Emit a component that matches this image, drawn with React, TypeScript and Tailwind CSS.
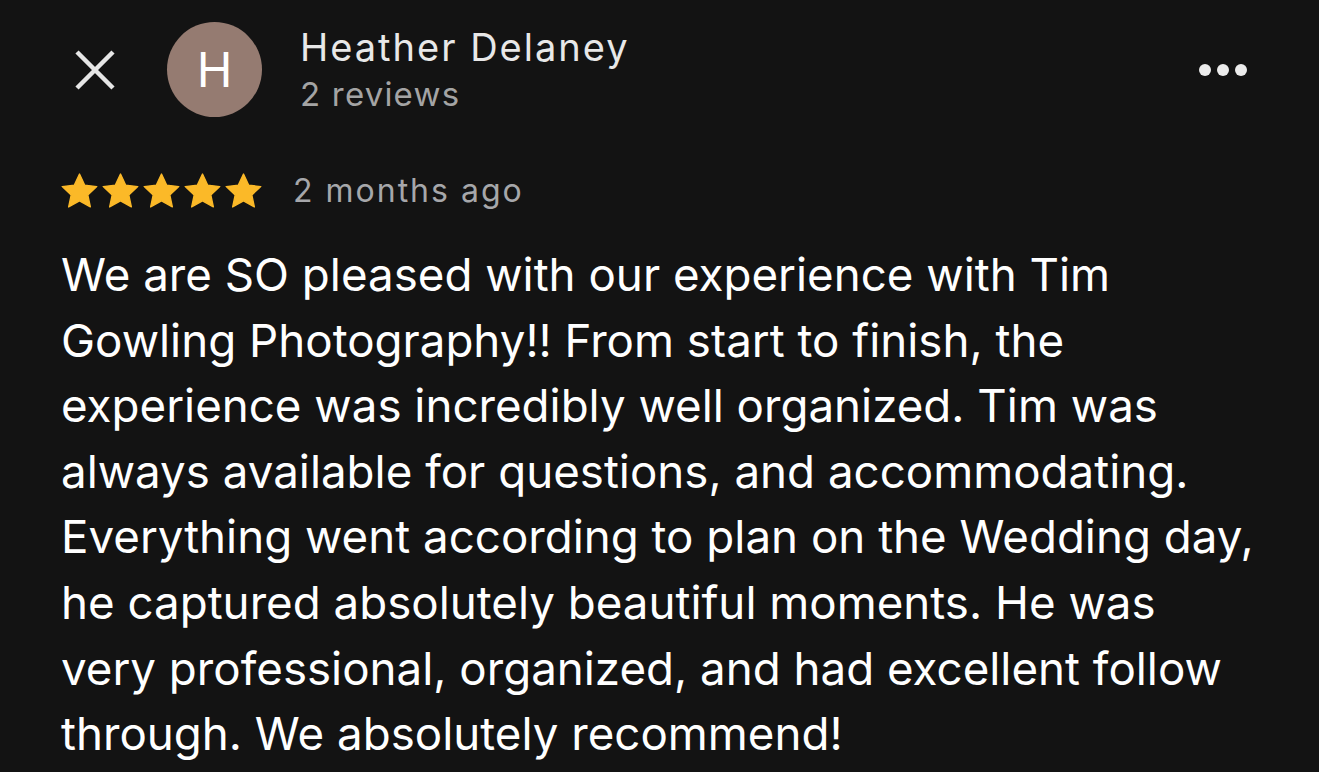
import React from "react";

const reviewLines = [
  "We are SO pleased with our experience with Tim",
  "Gowling Photography!! From start to finish, the",
  "experience was incredibly well organized. Tim was",
  "always available for questions, and accommodating.",
  "Everything went according to plan on the Wedding day,",
  "he captured absolutely beautiful moments. He was",
  "very professional, organized, and had excellent follow",
  "through. We absolutely recommend!",
];

const StarIcon = () => (
  <svg width="41" height="39" viewBox="0 0 24 23" className="shrink-0">
    <path
      d="M12 1.2l3.1 6.6 7.1.8-5.3 4.9 1.5 7.1L12 17l-6.4 3.6 1.5-7.1L1.8 8.6l7.1-.8z"
      fill="#fbb928"
      stroke="#fbb928"
      strokeWidth="0.8"
      strokeLinejoin="round"
    />
  </svg>
);

export default function App() {
  return (
    <div className="min-h-screen bg-[#131313] pl-[61px] pr-[66px] font-['Inter',sans-serif] overflow-hidden">
      {/* header */}
      <div className="flex items-center h-[95px] pt-[22px] box-content">
        <button className="ml-[13px] w-[42px] h-[42px] flex items-center justify-center">
          <svg width="42" height="42" viewBox="0 0 42 42">
            <path d="M3 3L39 39M39 3L3 39" stroke="#e6e6e6" strokeWidth="4.5" strokeLinecap="butt" />
          </svg>
        </button>
        <div className="ml-[51px] w-[95px] h-[95px] rounded-full bg-[#957b71] flex items-center justify-center text-white text-[48px] leading-none">
          H
        </div>
        <div className="ml-[38px] mt-[3px] flex flex-col">
          <span className="text-[38px] leading-[46px] tracking-[2px] text-[#e8e8e8]">Heather Delaney</span>
          <span className="text-[33px] leading-[48px] tracking-[1.2px] text-[#a4a4a4]">2 reviews</span>
        </div>
        <div className="ml-auto mr-[6px] flex items-center gap-[6px]">
          <span className="w-[12px] h-[12px] rounded-full bg-[#ececec]" />
          <span className="w-[12px] h-[12px] rounded-full bg-[#ececec]" />
          <span className="w-[12px] h-[12px] rounded-full bg-[#ececec]" />
        </div>
      </div>

      {/* rating */}
      <div className="flex items-center mt-[54px] h-[40px]">
        <div className="flex items-center -ml-[2px]">
          <StarIcon />
          <StarIcon />
          <StarIcon />
          <StarIcon />
          <StarIcon />
        </div>
        <span className="ml-[29px] text-[32px] tracking-[2px] text-[#a6a7aa]">2 months ago</span>
      </div>

      {/* body */}
      <div className="mt-[31px] text-[45.7px] leading-[65.6px] text-white">
        {reviewLines.map((line, i) => (
          <span key={i} className="block whitespace-nowrap">
            {line}
          </span>
        ))}
      </div>
    </div>
  );
}
